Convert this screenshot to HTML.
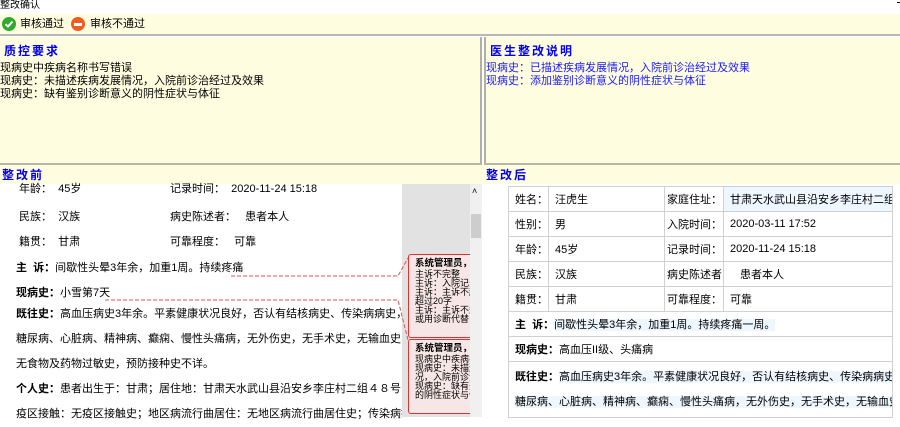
<!DOCTYPE html>
<html><head><meta charset="utf-8"><style>
*{margin:0;padding:0;box-sizing:border-box}
body{width:900px;height:417px;overflow:hidden;background:#fff;font-family:"Liberation Sans","Noto Sans CJK SC","WenQuanYi Zen Hei",sans-serif;font-size:11px;color:#000;position:relative}
.a{position:absolute;white-space:nowrap}
.blue{color:#1a1aff}
.h{color:#0000ee;font-weight:bold;letter-spacing:2px;font-size:12px}
.cm{position:absolute;left:408px;width:62px;background:#f7e6e6;border:1px solid #e03030;border-right:none;border-radius:3px 0 0 3px;font-size:9px;line-height:9px;overflow:hidden;padding:4px 0 0 6px;white-space:nowrap}
.cm b{display:block;font-size:9.5px;margin-bottom:2px}
table{table-layout:fixed}
td{border:1px solid #d0d0d0;padding:0 0 0 6px;height:25px;font-size:11px;white-space:nowrap;overflow:hidden}
.hl{background:#eef6ff}
</style></head><body>
<div class="a" style="left:0;top:0;font-size:10px;line-height:12px">整改确认</div>
<div class="a" style="left:897px;top:2px;width:5px;height:1px;background:#000"></div>
<div class="a" style="left:0;top:14px;width:900px;height:22px;background:#fffde0;border-bottom:2px solid #b8b8b8"></div>
<div class="a" style="left:2px;top:17px;width:14px;height:14px;border-radius:50%;background:#2eaa2e"></div>
<svg class="a" style="left:2px;top:17px" width="14" height="14"><path d="M3.5 7.2 L6 9.6 L10.5 4.6" stroke="#fff" stroke-width="2" fill="none"/></svg>
<div class="a" style="left:20px;top:17px;line-height:14px">审核通过</div>
<div class="a" style="left:71px;top:17px;width:14px;height:14px;border-radius:50%;background:#f25a1e"></div>
<div class="a" style="left:74px;top:23px;width:8px;height:3px;background:#fff"></div>
<div class="a" style="left:90px;top:17px;line-height:14px">审核不通过</div>

<div class="a" style="left:0;top:37px;width:482px;height:128px;background:#fffde0;border-right:2px solid #b0b0a8;border-bottom:2px solid #b8b8a8"></div>
<div class="a" style="left:484px;top:37px;width:416px;height:128px;background:#fffde0;border-left:2px solid #b0b0a8;border-bottom:2px solid #b8b8a8"></div>
<div class="a h" style="left:4px;top:42px">质控要求</div>
<div class="a" style="left:0;top:62px;line-height:13px">现病史中疾病名称书写错误<br>现病史：未描述疾病发展情况，入院前诊治经过及效果<br>现病史：缺有鉴别诊断意义的阴性症状与体征</div>
<div class="a h" style="left:490px;top:42px">医生整改说明</div>
<div class="a blue" style="left:486px;top:62px;line-height:13px">现病史：已描述疾病发展情况，入院前诊治经过及效果<br>现病史：添加鉴别诊断意义的阴性症状与体征</div>

<div class="a" style="left:0;top:165px;width:900px;height:19px;background:#fffde0"></div>
<div class="a h" style="left:2px;top:166px">整改前</div>
<div class="a h" style="left:486px;top:166px">整改后</div>

<div class="a" style="left:402px;top:184px;width:68px;height:233px;background:#e2e2e2"></div>
<div class="a" style="left:470px;top:184px;width:12px;height:233px;background:#f0f0f0"></div>
<div class="a" style="left:471px;top:214px;width:10px;height:24px;background:#cdcdcd"></div>
<div class="a" style="left:472px;top:186px;font-size:9px">˄</div>

<div class="a" style="left:19px;top:182px;line-height:14px">年龄：&nbsp;&nbsp;45岁</div>
<div class="a" style="left:170px;top:182px;line-height:14px">记录时间：&nbsp;&nbsp;2020-11-24 15:18</div>
<div class="a" style="left:19px;top:208px">民族：&nbsp;&nbsp;汉族</div>
<div class="a" style="left:170px;top:208px">病史陈述者：&nbsp;&nbsp;&nbsp;患者本人</div>
<div class="a" style="left:19px;top:233px">籍贯：&nbsp;&nbsp;甘肃</div>
<div class="a" style="left:170px;top:233px">可靠程度：&nbsp;&nbsp;&nbsp;可靠</div>
<div class="a" style="left:16px;top:259px"><b>主&nbsp;&nbsp;诉：</b>间歇性头晕3年余，加重1周。持续疼痛</div>
<div class="a" style="left:16px;top:284px"><b>现病史：</b>小雪第7天</div>
<div class="a" style="left:16px;top:302px;line-height:25px;width:386px;overflow:hidden"><b>既往史：</b>高血压病史3年余。平素健康状况良好，否认有结核病史、传染病病史，无<br>糖尿病、心脏病、精神病、癫痫、慢性头痛病，无外伤史，无手术史，无输血史，<br>无食物及药物过敏史，预防接种史不详。</div>
<div class="a" style="left:16px;top:377px;line-height:25px;width:386px;overflow:hidden"><b>个人史：</b>患者出生于：甘肃；居住地：甘肃天水武山县沿安乡李庄村二组４８号；<br>疫区接触：无疫区接触史；地区病流行曲居住：无地区病流行曲居住史；传染病接</div>
<svg class="a" style="left:0;top:0" width="420" height="417"><path d="M231 276 H398 L408 258" stroke="#e05050" stroke-dasharray="4,2" fill="none"/><path d="M105 300 H398 L408 340" stroke="#e05050" stroke-dasharray="4,2" fill="none"/></svg>
<div class="cm" style="top:254px;height:84px"><b>系统管理员，2</b>主诉不完整<br>主诉：入院记录<br>主诉：主诉不超<br>超过20字<br>主诉：主诉不规<br>或用诊断代替</div>
<div class="cm" style="top:339px;height:75px"><b>系统管理员，2</b>现病史中疾病名<br>现病史：未描述<br>况，入院前诊治<br>现病史：缺有鉴<br>的阴性症状与体</div>

<table class="a" style="left:508px;top:186px;width:385px;border-collapse:collapse">
<colgroup><col style="width:40px"><col style="width:116px"><col style="width:59px"><col></colgroup>
<tr><td>姓名：</td><td>汪虎生</td><td style="padding-left:2px">家庭住址：</td><td class="hl">甘肃天水武山县沿安乡李庄村二组</td></tr>
<tr><td>性别：</td><td>男</td><td style="padding-left:2px">入院时间：</td><td>2020-03-11 17:52</td></tr>
<tr><td>年龄：</td><td>45岁</td><td style="padding-left:2px">记录时间：</td><td>2020-11-24 15:18</td></tr>
<tr><td>民族：</td><td>汉族</td><td style="padding-left:2px">病史陈述者：</td><td style="padding-left:16px">患者本人</td></tr>
<tr><td>籍贯：</td><td>甘肃</td><td style="padding-left:2px">可靠程度：</td><td>可靠</td></tr>
<tr><td colspan="4"><b>主&nbsp;&nbsp;诉：</b><span class="hl">间歇性头晕3年余，加重1周。持续疼痛一周。</span></td></tr>
<tr><td colspan="4"><b>现病史：</b>高血压II级、头痛病</td></tr>
<tr><td colspan="4" style="line-height:25px;height:56px;vertical-align:top;padding-top:3px"><b>既往史：</b><span class="hl">高血压病史3年余。平素健康状况良好，否认有结核病史、传染病病史，无</span><br><span class="hl">糖尿病、心脏病、精神病、癫痫、慢性头痛病，无外伤史，无手术史，无输血史，</span></td></tr>
</table>
</body></html>
